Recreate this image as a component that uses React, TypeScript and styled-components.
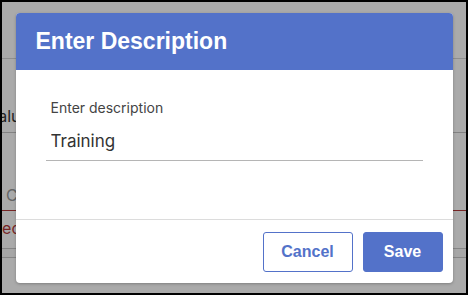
import React from "react";
import styled, { createGlobalStyle } from "styled-components";

const Global = createGlobalStyle`
  html, body { margin: 0; padding: 0; background: #000; }
  * { box-sizing: border-box; }
`;

const Frame = styled.div`
  width: 468px;
  height: 295px;
  border: 2px solid #000;
  overflow: hidden;
  position: relative;
  font-family: Inter, "Liberation Sans", sans-serif;
`;

const Page = styled.div`
  height: 100%;
  background: #fff;
  display: flex;
  flex-direction: column;
  margin-left: -16px;
  width: calc(100% + 16px);
`;

const PageHeader = styled.div`
  height: 57px;
  border-bottom: 1px solid #d6d6d6;
  flex: none;
`;

const FieldRow = styled.div`
  height: 74px;
  border-bottom: 1px solid #c4c4c4;
  display: flex;
  align-items: flex-end;
  padding-bottom: 6px;
  flex: none;
`;

const RowLabel = styled.span`
  font-size: 16px;
  color: #333;
  padding-left: 2px;
`;

const PlaceholderRow = styled.div`
  height: 78px;
  border-bottom: 1px solid #b33a3a;
  display: flex;
  align-items: center;
  padding-left: 20px;
  padding-top: 46px;
  flex: none;
  font-size: 16px;
  color: #999;
`;

const ErrorText = styled.div`
  font-size: 16px;
  color: #b33a3a;
  padding-left: 6px;
  height: 37px;
  line-height: 34px;
  flex: none;
  white-space: nowrap;
`;

const Band = styled.div`
  height: 10px;
  border-top: 1px solid #c8c8c8;
  border-bottom: 1px solid #c8c8c8;
  background: #fafafa;
  flex: none;
`;

const Overlay = styled.div`
  position: absolute;
  inset: 0;
  background: rgba(0, 0, 0, 0.333);
  display: flex;
  align-items: center;
  justify-content: center;
`;

const Dialog = styled.div`
  width: 437px;
  height: 270px;
  background: #fff;
  border-radius: 4px;
  overflow: hidden;
  box-shadow: 0 1px 3px rgba(0, 0, 0, 0.25);
  display: flex;
  flex-direction: column;
`;

const Header = styled.div`
  height: 57px;
  background: #5372c9;
  display: flex;
  align-items: center;
  padding-left: 20px;
  flex: none;
`;

const Title = styled.h2`
  margin: 0;
  font-family: "Liberation Sans", Arial, sans-serif;
  font-weight: 700;
  font-size: 23px;
  color: #fff;
`;

const Body = styled.div`
  flex: 1;
  padding: 29px 30px 0 30px;
  border-bottom: 1px solid #dcdcdc;
`;

const Label = styled.label`
  display: block;
  font-size: 14px;
  line-height: 18px;
  color: #444;
  padding-left: 5px;
  margin-bottom: 6px;
`;

const Input = styled.input`
  display: block;
  width: 100%;
  height: 38px;
  border: none;
  border-bottom: 1px solid #b5b5b5;
  padding: 0 5px;
  font-family: Inter, "Liberation Sans", sans-serif;
  font-size: 17px;
  color: #333;
  outline: none;
  background: transparent;
`;

const Footer = styled.div`
  height: 63px;
  flex: none;
  display: flex;
  justify-content: flex-end;
  align-items: flex-start;
  gap: 10px;
  padding: 12px 10px 0 0;
`;

const Button = styled.button<{ $primary?: boolean; $w: number }>`
  width: ${(p) => p.$w}px;
  height: 40px;
  border-radius: 3px;
  border: 1px solid #5372c9;
  background: ${(p) => (p.$primary ? "#5372c9" : "#fff")};
  color: ${(p) => (p.$primary ? "#fff" : "#5372c9")};
  font-family: "Liberation Sans", Arial, sans-serif;
  font-weight: 700;
  font-size: 16px;
  padding: 0;
  cursor: pointer;
`;

export default function App() {
  return (
    <>
      <Global />
      <Frame>
        <Page>
          <PageHeader />
          <FieldRow>
            <RowLabel>Value</RowLabel>
          </FieldRow>
          <PlaceholderRow>C</PlaceholderRow>
          <ErrorText>Record required</ErrorText>
          <Band />
        </Page>
        <Overlay>
          <Dialog>
            <Header>
              <Title>Enter Description</Title>
            </Header>
            <Body>
              <Label htmlFor="desc">Enter description</Label>
              <Input id="desc" defaultValue="Training" />
            </Body>
            <Footer>
              <Button $w={90}>Cancel</Button>
              <Button $w={80} $primary>
                Save
              </Button>
            </Footer>
          </Dialog>
        </Overlay>
      </Frame>
    </>
  );
}
